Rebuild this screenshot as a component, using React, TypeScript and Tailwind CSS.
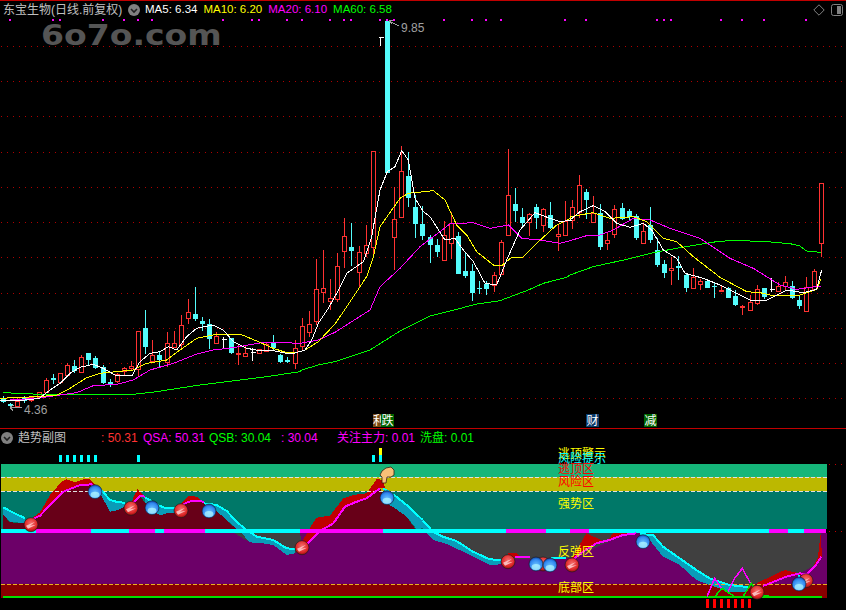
type Pt = [number, number];
// candle: centre x, high, body top, body bottom, low, kind (r red, c cyan, w white doji)
type Raw = [number, number, number, number, number, string];

const RED = "#ff3232";
const CYAN = "#54fcfc";

// all the numbers below were read off 3x crops, hence the offsets
const toCandles = (ox: number, oy: number, rows: Raw[]) =>
  rows.map(([x, h, t, b, l, k]) => ({
    x: Math.floor(ox + x / 3) + 0.5,
    h: Math.round(oy + h / 3),
    t: Math.round(oy + t / 3),
    b: Math.round(oy + b / 3),
    l: Math.round(oy + l / 3),
    k,
  }));

const candles = [
  ...toCandles(0, 280, [
    [10, 348, 355, 366, 368, "c"], [31, 368, 373, 377, 382, "c"], [52, 355, 362, 378, 380, "r"], [73, 347, 355, 362, 368, "c"],
    [94, 348, 352, 360, 365, "r"], [118, 335, 335, 350, 352, "r"], [139, 295, 301, 335, 338, "r"], [160, 282, 295, 299, 312, "c"],
    [181, 280, 280, 306, 310, "r"], [202, 250, 256, 285, 286, "r"], [223, 240, 258, 273, 278, "c"], [244, 225, 232, 275, 278, "r"],
    [265, 220, 220, 240, 258, "c"], [286, 228, 235, 264, 268, "c"], [310, 255, 260, 310, 312, "c"], [331, 297, 307, 311, 320, "c"],
    [352, 280, 283, 303, 310, "r"], [373, 262, 263, 273, 288, "r"], [394, 243, 258, 264, 270, "r"], [415, 153, 153, 268, 288, "r"],
    [436, 90, 145, 200, 222, "c"], [457, 180, 225, 242, 243, "r"], [478, 212, 225, 240, 265, "c"], [502, 155, 190, 246, 262, "r"],
    [523, 153, 190, 201, 201, "r"], [544, 105, 136, 192, 210, "r"], [565, 57, 97, 113, 132, "r"], [586, 22, 102, 117, 122, "c"],
    [607, 112, 123, 132, 152, "c"], [628, 118, 133, 178, 207, "c"], [649, 156, 168, 189, 192, "r"], [670, 170, 176, 176, 207, "w"],
    [694, 175, 175, 219, 222, "c"], [715, 195, 219, 223, 255, "r"], [736, 197, 220, 227, 228, "r"], [757, 205, 215, 215, 243, "w"],
    [778, 208, 208, 220, 223, "r"], [799, 190, 193, 213, 215, "r"], [820, 166, 190, 205, 212, "c"], [841, 222, 225, 246, 248, "c"],
    [862, 232, 240, 245, 250, "c"], [886, 180, 205, 248, 267, "r"],
  ]),
  ...toCandles(285, 300, [
    [52, 55, 78, 137, 150, "r"], [73, 33, 72, 95, 110, "r"],
  ]),
  ...toCandles(300, 20, [
    [49, 716, 808, 904, 915, "r"], [70, 690, 805, 815, 850, "r"], [91, 778, 835, 842, 870, "r"], [112, 700, 739, 838, 845, "r"],
    [133, 595, 649, 692, 745, "r"], [154, 610, 681, 692, 738, "c"], [178, 678, 697, 755, 805, "r"], [199, 615, 676, 699, 712, "r"],
    [220, 392, 392, 682, 715, "r"], [241, 52, 52, 52, 78, "w"], [262, 3, 3, 458, 460, "c"], [283, 502, 598, 650, 750, "r"],
    [304, 377, 454, 590, 590, "r"], [325, 396, 468, 533, 560, "c"], [346, 525, 561, 612, 653, "c"], [367, 558, 612, 648, 660, "c"],
    [391, 645, 652, 675, 730, "c"], [412, 657, 676, 696, 710, "c"], [433, 603, 646, 719, 719, "r"], [454, 576, 608, 670, 716, "r"],
    [475, 635, 648, 762, 762, "c"], [496, 700, 753, 768, 773, "c"], [517, 732, 753, 818, 842, "c"], [538, 783, 805, 808, 822, "c"],
    [559, 783, 792, 806, 824, "c"], [583, 757, 766, 796, 815, "r"], [604, 660, 667, 762, 762, "r"], [625, 388, 526, 646, 646, "r"],
    [646, 504, 552, 573, 605, "c"], [667, 565, 591, 609, 618, "c"], [688, 578, 583, 605, 648, "r"], [709, 552, 561, 594, 627, "c"],
    [730, 565, 568, 614, 636, "r"], [751, 546, 585, 625, 628, "c"], [775, 612, 643, 648, 692, "r"], [796, 543, 603, 644, 644, "r"],
  ]),
  ...toCandles(570, 170, [
    [7, 90, 112, 150, 178, "r"], [28, 15, 46, 125, 145, "r"], [49, 57, 66, 90, 148, "c"], [70, 78, 130, 155, 155, "r"],
    [91, 102, 130, 231, 240, "c"], [112, 190, 211, 218, 240, "r"], [133, 105, 118, 191, 203, "r"], [157, 98, 114, 148, 150, "c"],
    [178, 118, 124, 140, 150, "c"], [199, 133, 139, 205, 210, "c"], [220, 160, 184, 218, 218, "r"], [241, 111, 165, 210, 218, "c"],
    [262, 205, 240, 286, 290, "c"], [283, 270, 282, 309, 324, "c"], [304, 260, 294, 300, 345, "r"], [325, 258, 288, 293, 330, "c"],
    [349, 312, 315, 354, 365, "c"], [370, 294, 322, 353, 358, "r"], [391, 327, 334, 341, 360, "r"], [412, 333, 333, 354, 354, "c"],
    [433, 340, 347, 350, 384, "c"], [454, 347, 360, 363, 365, "r"], [475, 352, 354, 384, 384, "c"], [496, 360, 378, 405, 408, "c"],
    [517, 405, 408, 412, 435, "r"], [541, 375, 396, 419, 419, "r"], [562, 345, 358, 398, 404, "r"], [583, 354, 354, 382, 388, "c"],
    [604, 325, 358, 358, 366, "w"], [625, 336, 348, 362, 366, "r"], [646, 318, 335, 349, 360, "r"], [667, 333, 349, 384, 387, "c"],
    [688, 378, 390, 408, 416, "c"], [709, 322, 352, 422, 422, "r"], [733, 298, 304, 358, 362, "r"], [754, 40, 40, 218, 262, "r"],
  ]),
];

const conv = (ox: number, oy: number, pts: Pt[]) => pts.map(([x, y]) => `${ox + x / 3},${oy + y / 3}`).join(" ");
const join = (...parts: string[]) => parts.join(" ");

const ma5 = join(
  conv(0, 280, [[0, 360], [60, 362], [118, 355], [150, 330], [180, 310], [210, 280], [240, 262], [280, 253], [310, 265], [345, 285], [395, 288], [420, 245], [450, 220], [480, 215], [505, 200], [530, 210], [560, 170], [590, 145], [640, 135], [670, 150], [700, 185], [740, 205], [780, 212], [820, 212], [860, 220], [885, 219]]),
  conv(285, 300, [[60, 150], [80, 120], [100, 70]]),
  conv(300, 20, [[85, 865], [110, 820], [140, 760], [190, 725], [215, 650], [240, 510], [262, 455], [285, 440], [305, 392], [325, 420], [345, 535], [370, 575], [390, 590], [435, 660], [465, 655], [490, 690], [520, 725], [555, 790], [590, 795], [620, 720], [660, 630], [705, 578], [750, 595], [780, 605], [815, 600]]),
  conv(570, 170, [[0, 150], [30, 125], [70, 107], [105, 125], [140, 160], [180, 172], [220, 160], [245, 180], [280, 240], [320, 265], [345, 310], [400, 325], [450, 345], [490, 365], [540, 390], [590, 390], [650, 360], [700, 368], [740, 358], [755, 300]]),
);
const ma10 = join(
  conv(0, 280, [[0, 355], [60, 352], [118, 350], [170, 345], [210, 325], [260, 293], [300, 280], [350, 275], [400, 270], [440, 250], [500, 240], [540, 210], [590, 175], [640, 165], [720, 162], [770, 183], [820, 205], [860, 218], [885, 219]]),
  conv(285, 300, [[60, 150], [100, 125], [150, 72]]),
  conv(300, 20, [[135, 868], [200, 770], [220, 710], [240, 620], [300, 535], [325, 520], [400, 512], [435, 540], [470, 615], [500, 645], [530, 695], [580, 735], [605, 737], [635, 712], [668, 712], [710, 670], [770, 615], [810, 595]]),
  conv(570, 170, [[0, 140], [70, 128], [120, 145], [190, 140], [230, 155], [280, 205], [320, 215], [370, 260], [450, 322], [530, 365], [570, 368], [610, 377], [680, 378], [740, 358], [752, 328]]),
);
const ma20 = join(
  conv(0, 280, [[0, 362], [110, 355], [180, 345], [230, 338], [280, 317], [350, 313], [400, 300], [450, 270], [520, 250], [590, 222], [640, 210], [700, 203], [790, 187], [850, 188], [900, 190]]),
  conv(285, 300, [[100, 120], [150, 97]]),
  conv(300, 20, [[210, 870], [240, 800], [300, 745], [360, 680], [450, 612], [520, 608], [570, 625], [625, 615], [665, 655], [720, 660], [780, 670]]),
  conv(570, 170, [[0, 212], [50, 197], [90, 195], [130, 180], [190, 145], [240, 150], [300, 175], [390, 205], [480, 265], [550, 295], [630, 345], [680, 358], [752, 348]]),
);
const ma60 = join(
  conv(0, 280, [[10, 338], [100, 342], [118, 345], [400, 343], [470, 335], [600, 315], [720, 300], [800, 290], [900, 275]]),
  conv(285, 300, [[50, 210], [100, 195], [150, 185]]),
  conv(0, 0, [[1110, 1050], [1200, 993], [1290, 948]]),
  conv(300, 20, [[470, 868], [530, 852], [600, 842], [680, 812], [730, 790], [800, 772]]),
  conv(570, 170, [[0, 315], [70, 290], [170, 268], [250, 248], [330, 233], [440, 215], [490, 211], [590, 215], [660, 221], [690, 228], [710, 243], [752, 247]]),
);

const grid = [46, 81, 116, 152, 187, 222, 257, 293, 328, 363, 398];
const topDots = [
  ...[30, 158, 179, 308, 371, 413, 455, 668, 755, 776, 860, 906, 990, 1032, 1052, 1140, 1161, 1182].map((x) => x / 3),
  ...[63, 147, 189, 234, 426, 489, 702, 723, 744, 894, 957, 1023, 1149].map((x) => 423 + x / 3),
];

// lower panel, crop coords: a = left crop, b = right crop
const a = (pts: Pt[]) => conv(0, 425, pts);
const b = (pts: Pt[]) => conv(423, 425, pts);

const grayAreas = [
  a([[700, 323], [900, 323], [906, 360], [886, 385], [860, 390], [820, 360], [790, 355], [750, 352]]),
  b([[30, 323], [640, 323], [600, 330], [447, 400], [430, 398], [385, 398], [235, 405], [200, 403], [150, 380], [100, 348], [60, 335]]),
  b([[650, 323], [1195, 323], [1185, 395], [1170, 425], [1130, 445], [1085, 435], [1000, 475], [980, 487], [920, 480], [860, 460], [820, 435], [770, 400], [720, 365], [690, 330]]),
];
const darkRed = [
  a([[10, 318], [10, 270], [30, 292], [75, 295], [93, 285], [120, 272], [150, 240], [190, 200], [240, 180], [275, 178], [285, 190], [300, 205], [330, 260], [355, 255], [375, 245], [393, 240], [420, 213], [436, 235], [480, 272], [500, 265], [525, 265], [543, 243], [565, 230], [600, 227], [640, 250], [680, 285], [715, 318]]),
  a([[955, 318], [1000, 295], [1035, 245], [1065, 232], [1100, 220], [1140, 190], [1160, 235], [1185, 250], [1220, 275], [1250, 318]]),
];
const brightRed = [
  a([[93, 282], [120, 262], [150, 210], [185, 170], [200, 163], [225, 172], [250, 163], [270, 163], [285, 180], [285, 190], [275, 178], [240, 180], [190, 200], [150, 240], [120, 272], [93, 285]]),
  a([[393, 235], [405, 205], [413, 192], [425, 205], [436, 215], [420, 213], [393, 240]]),
  a([[543, 235], [565, 213], [590, 215], [612, 232], [600, 227], [565, 230], [543, 243]]),
  a([[906, 350], [935, 300], [950, 278], [990, 272], [1030, 220], [1060, 210], [1100, 205], [1130, 162], [1150, 165], [1155, 190], [1140, 190], [1100, 220], [1065, 232], [1035, 245], [1000, 295], [960, 318], [920, 358]]),
  b([[255, 396], [255, 385], [280, 385], [295, 396]]),
  b([[447, 400], [490, 325], [550, 352], [570, 325], [610, 320], [640, 325], [600, 330], [560, 345], [520, 355], [480, 380], [447, 405]]),
  b([[1000, 475], [1085, 435], [1130, 445], [1150, 445], [1170, 425], [1185, 395], [1193, 325], [1197, 395], [1175, 425], [1150, 448], [1130, 450], [1090, 455], [1020, 483]]),
];
const teal = [
  a([[10, 247], [30, 258], [75, 280], [75, 295], [30, 290], [10, 270]]),
  a([[285, 185], [300, 190], [330, 225], [355, 232], [375, 233], [375, 245], [355, 255], [330, 260], [300, 205], [285, 200]]),
  a([[436, 218], [480, 243], [500, 250], [525, 250], [525, 265], [500, 265], [480, 272], [436, 235]]),
  a([[612, 235], [650, 240], [680, 258], [710, 290], [735, 312], [770, 335], [820, 345], [860, 370], [886, 372], [886, 385], [860, 390], [820, 360], [790, 355], [750, 352], [720, 320], [680, 285], [640, 250]]),
  a([[1150, 190], [1185, 212], [1220, 240], [1268, 285], [1269, 310], [1250, 312], [1220, 275], [1185, 250], [1160, 235]]),
  b([[0, 287], [30, 320], [60, 335], [100, 348], [150, 380], [200, 403], [235, 405], [235, 418], [200, 420], [150, 395], [75, 358], [30, 345], [0, 310]]),
  b([[650, 327], [690, 330], [720, 365], [770, 400], [820, 435], [860, 460], [920, 480], [980, 487], [970, 500], [920, 500], [860, 480], [820, 465], [770, 420], [720, 395], [680, 345], [660, 335]]),
];
const magentaLines = [
  a([[93, 285], [120, 272], [150, 240], [190, 200], [240, 180], [275, 178], [285, 190]]),
  a([[393, 240], [420, 213], [436, 215]]),
  a([[543, 243], [565, 230], [600, 227], [612, 232]]),
  a([[920, 358], [960, 318], [1000, 295], [1035, 245], [1065, 232], [1100, 220], [1140, 190]]),
  b([[275, 396], [320, 396]]),
  b([[447, 405], [480, 380], [520, 355], [560, 345], [600, 330], [640, 325]]),
  b([[1020, 483], [1090, 455], [1130, 445], [1150, 448], [1175, 425], [1195, 395]]),
];
const cyanLines = [
  a([[10, 247], [30, 258], [75, 280]]),
  a([[285, 185], [300, 190], [330, 225], [355, 232], [375, 233]]),
  a([[436, 218], [480, 243], [500, 250], [525, 250]]),
  a([[612, 235], [650, 240], [680, 258], [710, 290], [735, 312], [770, 335], [820, 345], [860, 370], [886, 372]]),
  a([[1150, 190], [1185, 212], [1220, 240], [1268, 285]]),
  b([[0, 287], [30, 320], [60, 335], [100, 348], [150, 380], [200, 403], [235, 405]]),
  b([[385, 398], [430, 398]]),
  b([[650, 327], [690, 330], [720, 365], [770, 400], [820, 435], [860, 460], [920, 480], [980, 487]]),
  b([[1128, 450], [1128, 458]]),
];

// [start, end, colour] of the strip along the 50 line
const strip: [number, number, string][] = [
  [1, 36, "#00ffff"], [36, 91, "#ff00ff"], [91, 129, "#00ffff"], [129, 155, "#ff00ff"], [155, 164, "#00ffff"], [164, 205, "#ff00ff"],
  [205, 300, "#00ffff"], [300, 383, "#ff00ff"], [383, 506, "#00ffff"], [506, 546, "#ff00ff"], [546, 570, "#00ffff"], [570, 589, "#ff00ff"],
  [589, 769, "#00ffff"], [769, 788, "#ff00ff"], [788, 804, "#00ffff"], [804, 826, "#ff00ff"],
];

const ticks = [59, 66, 73, 80, 87, 94, 137, 372, 379];
const redBars = [849, 870, 891, 912, 933, 954, 975].map((x) => Math.round(423 + x / 3));

function Ball({ x, y, blue }: { x: number; y: number; blue?: boolean }) {
  return (
    <g>
      <circle cx={x} cy={y} r={7} fill={blue ? "url(#ballBlue)" : "url(#ballRed)"} stroke="#1a1a1a" strokeWidth={0.6} />
      {blue ? (
        <ellipse cx={x} cy={y + 3} rx={4.5} ry={3} fill="#aef4ff" opacity={0.75} />
      ) : (
        <path d={`M${x - 5} ${y + 1}L${x + 4} ${y - 3}L${x - 1} ${y + 1}L${x + 5} ${y}L${x - 3} ${y + 4}Z`} fill="#ffd0d0" opacity={0.85} />
      )}
    </g>
  );
}

function ChevronBadge({ className }: { className: string }) {
  return (
    <svg width="12" height="12" viewBox="0 0 12 12" className={className}>
      <circle cx="6" cy="6" r="6" fill="#808080" />
      <path d="M3 5l3 3 3-3" fill="none" stroke="#202020" strokeWidth="1.6" />
    </svg>
  );
}

export default function App() {
  return (
    <div
      className="w-[846px] h-[610px] bg-black flex flex-col overflow-hidden text-[12px] leading-none"
      style={{ fontFamily: '"Liberation Sans", "Noto Sans CJK SC", sans-serif' }}
    >
      <div className="h-px bg-[#c00000]" />

      {/* main chart header */}
      <div className="h-[18px] flex items-center pl-[3px] pr-[3px] shrink-0">
        <span className="text-[#c0c0c0] w-[125px] whitespace-nowrap">东宝生物(日线.前复权)</span>
        <ChevronBadge className="mr-[5px]" />
        <div className="flex gap-[6px] text-[11.5px] whitespace-nowrap">
          <span className="text-white">MA5: 6.34</span>
          <span className="text-[#ffff00]">MA10: 6.20</span>
          <span className="text-[#ff00ff]">MA20: 6.10</span>
          <span className="text-[#00ff00]">MA60: 6.58</span>
        </div>
        <div className="ml-auto flex items-center gap-[6px]">
          <svg width="12" height="12" viewBox="0 0 12 12">
            <path d="M6 .8L11.2 6 6 11.2 .8 6z" fill="none" stroke="#808080" />
          </svg>
          <svg width="12" height="12" viewBox="0 0 12 12">
            <rect x=".5" y=".5" width="11" height="11" rx="2" fill="none" stroke="#808080" />
            <rect x="6" y="2" width="4" height="8" fill="#808080" />
          </svg>
        </div>
      </div>

      {/* main chart */}
      <div className="relative h-[409px] shrink-0">
        <svg width="846" height="409" viewBox="0 19 846 409" className="block">
          <g shapeRendering="crispEdges">
            {grid.map((y) => (
              <line key={y} x1="1" x2="846" y1={y + 0.5} y2={y + 0.5} stroke="#b00000" strokeDasharray="1 5" />
            ))}
            {topDots.map((x) => (
              <rect key={x} x={Math.round(x) - 1} y="19" width="2" height="2" fill="#ff00ff" />
            ))}
            {candles.map((c) => {
              const color = c.k === "r" ? RED : c.k === "c" ? CYAN : "#ffffff";
              return (
                <g key={c.x}>
                  <line x1={c.x} x2={c.x} y1={c.h} y2={c.l} stroke={color} />
                  {c.k === "w" ? (
                    <line x1={c.x - 2} x2={c.x + 3} y1={c.t + 0.5} y2={c.t + 0.5} stroke={color} />
                  ) : c.k === "r" ? (
                    <rect x={c.x - 2} y={c.t + 0.5} width={4} height={Math.max(c.b - c.t, 1)} fill="#000" stroke={color} />
                  ) : (
                    <rect x={c.x - 2.5} y={c.t} width={5} height={Math.max(c.b - c.t, 1)} fill={color} />
                  )}
                </g>
              );
            })}
            <polyline points={ma60} fill="none" stroke="#00ff00" />
            <polyline points={ma20} fill="none" stroke="#ff00ff" />
            <polyline points={ma10} fill="none" stroke="#ffff00" />
            <polyline points={ma5} fill="none" stroke="#ffffff" />
            <path d="M389 21l10 5M389 21l3 3M389 21l4 -1" fill="none" stroke="#a0a0a0" />
            <path d="M10 407h12M10 407l3 4M10 407l4 -2" fill="none" stroke="#a0a0a0" />
          </g>
        </svg>

        <div
          className="absolute left-[41px] top-[2px] text-[29px] font-bold text-[#555555] scale-x-[1.14] origin-left"
          style={{ fontFamily: '"DejaVu Sans", sans-serif' }}
        >
          6o7o.com
        </div>
        <span className="absolute left-[401px] top-[3px] text-[#a0a0a0]">9.85</span>
        <span className="absolute left-[24px] top-[385px] text-[#a0a0a0]">4.36</span>

        <span className="absolute left-[373px] top-[395px] w-[12px] h-[13px] bg-[#7a4a10] text-white flex items-center">利</span>
        <span className="absolute left-[381px] top-[395px] w-[13px] h-[13px] bg-[#006400] text-white flex items-center justify-center">跌</span>
        <span className="absolute left-[586px] top-[395px] w-[13px] h-[13px] bg-[#0a3a6a] text-white flex items-center justify-center">财</span>
        <span className="absolute left-[644px] top-[395px] w-[13px] h-[13px] bg-[#006400] text-white flex items-center justify-center">减</span>
      </div>

      <div className="h-px bg-[#c00000] shrink-0" />

      {/* indicator header */}
      <div className="h-[17px] flex items-center pl-[1px] shrink-0 whitespace-nowrap">
        <ChevronBadge className="mr-[5px]" />
        <span className="text-[#c0c0c0] w-[83px]">趋势副图</span>
        <span className="text-[#ff3232] w-[42px]">: 50.31</span>
        <span className="text-[#ff00ff] w-[66px]">QSA: 50.31</span>
        <span className="text-[#00ff00] w-[72px]">QSB: 30.04</span>
        <span className="text-[#ff00ff] w-[56px]">: 30.04</span>
        <span className="text-[#ff00ff] w-[83px]">关注主力: 0.01</span>
        <span className="text-[#00ff00]">洗盘: 0.01</span>
      </div>

      {/* indicator chart */}
      <div className="relative flex-1">
        <svg width="846" height="164" viewBox="0 446 846 164" className="block">
          <defs>
            <radialGradient id="ballRed" cx="0.5" cy="0.4" r="0.6">
              <stop offset="0" stopColor="#f47070" />
              <stop offset="0.7" stopColor="#e02828" />
              <stop offset="1" stopColor="#901010" />
            </radialGradient>
            <radialGradient id="ballBlue" cx="0.5" cy="0.6" r="0.6">
              <stop offset="0" stopColor="#70c8ff" />
              <stop offset="0.7" stopColor="#3088f0" />
              <stop offset="1" stopColor="#1040a0" />
            </radialGradient>
          </defs>
          <g shapeRendering="crispEdges">
            {ticks.map((x) => (
              <rect key={x} x={x} y="455" width="3" height="7" fill="#00ffff" />
            ))}
            <rect x="379" y="448" width="3" height="7" fill="#ffff00" />

            <rect x="1" y="464" width="826" height="13" fill="#16b67a" />
            <rect x="1" y="477" width="826" height="14" fill="#bcb800" />
            <rect x="1" y="491" width="826" height="38" fill="#007868" />
            <rect x="1" y="533" width="826" height="51" fill="#6c0068" />
            <rect x="1" y="584" width="826" height="14" fill="#880000" />

            {grayAreas.map((p) => <polygon key={p} points={p} fill="#404040" />)}
            {darkRed.map((p) => <polygon key={p} points={p} fill="#680018" />)}
            {brightRed.map((p) => <polygon key={p} points={p} fill="#c00000" />)}
            {teal.map((p) => <polygon key={p} points={p} fill="#0a9cb8" />)}

            {strip.map(([s, e, c]) => (
              <rect key={s} x={s} y="529" width={e - s} height="4" fill={c} />
            ))}
            <line x1="1" x2="827" y1="477.5" y2="477.5" stroke="#e0e0e0" strokeDasharray="4 2" />
            <line x1="1" x2="827" y1="491.5" y2="491.5" stroke="#e0e0e0" strokeDasharray="4 2" />
            <line x1="1" x2="827" y1="584.5" y2="584.5" stroke="#e8b020" strokeDasharray="4 2" />
            <line x1="829" x2="846" y1="464.5" y2="464.5" stroke="#c00000" strokeDasharray="1 5" />
            <line x1="829" x2="846" y1="531.5" y2="531.5" stroke="#c00000" strokeDasharray="1 5" />
            <rect x="3" y="596" width="819" height="2" fill="#00e000" />

            {cyanLines.map((p) => <polyline key={p} points={p} fill="none" stroke="#00ffff" strokeWidth="2" />)}
            {magentaLines.map((p) => <polyline key={p} points={p} fill="none" stroke="#ff00ff" strokeWidth="2" />)}

            <polyline points={b([[852, 515], [875, 460], [895, 490], [915, 500], [935, 460], [958, 430], [985, 480]])} fill="none" stroke="#ff00ff" strokeWidth="1.5" />
            <polyline points={b([[875, 515], [897, 490], [935, 515], [960, 515], [985, 475], [1000, 500], [1020, 510], [1045, 515]])} fill="none" stroke="#00e000" strokeWidth="1.5" />
            {redBars.map((x) => (
              <rect key={x} x={x} y="599" width="3" height="9" fill="#ff0000" />
            ))}
          </g>

          <Ball x={31} y={524.7} />
          <Ball x={95} y={491.7} blue />
          <Ball x={131} y={508.3} />
          <Ball x={152} y={507.7} blue />
          <Ball x={181} y={510.7} />
          <Ball x={209} y={511} blue />
          <Ball x={302} y={547.7} />
          <Ball x={387} y={497.7} blue />
          <Ball x={508} y={561.7} />
          <Ball x={543} y={564} />
          <Ball x={536} y={564} blue />
          <Ball x={550} y={565} blue />
          <Ball x={572} y={565} />
          <Ball x={643} y={541.7} blue />
          <Ball x={757} y={592.3} />
          <Ball x={806} y={580.7} />
          <Ball x={799} y={584} blue />

          {/* pointing hand */}
          <path
            d="M382 483v-6l-2-2 2-4 4-3 5-1 3 3v5l-3 2h-4l-1 6z"
            fill="#f8c078"
            stroke="#3a2010"
            strokeWidth="0.8"
          />
        </svg>

        <span className="absolute left-[558px] top-[2px] text-[#ffff00]">逃顶警示</span>
        <span className="absolute left-[558px] top-[7px] text-[#00ffff]">风险提示</span>
        <span className="absolute left-[558px] top-[17px] text-[#ff0000]">逃顶区</span>
        <span className="absolute left-[558px] top-[30px] text-[#ff0000]">风险区</span>
        <span className="absolute left-[558px] top-[52px] text-[#ffff00]">强势区</span>
        <span className="absolute left-[558px] top-[100px] text-[#ffff00]">反弹区</span>
        <span className="absolute left-[558px] top-[136px] text-[#ffff00]">底部区</span>
      </div>
    </div>
  );
}
